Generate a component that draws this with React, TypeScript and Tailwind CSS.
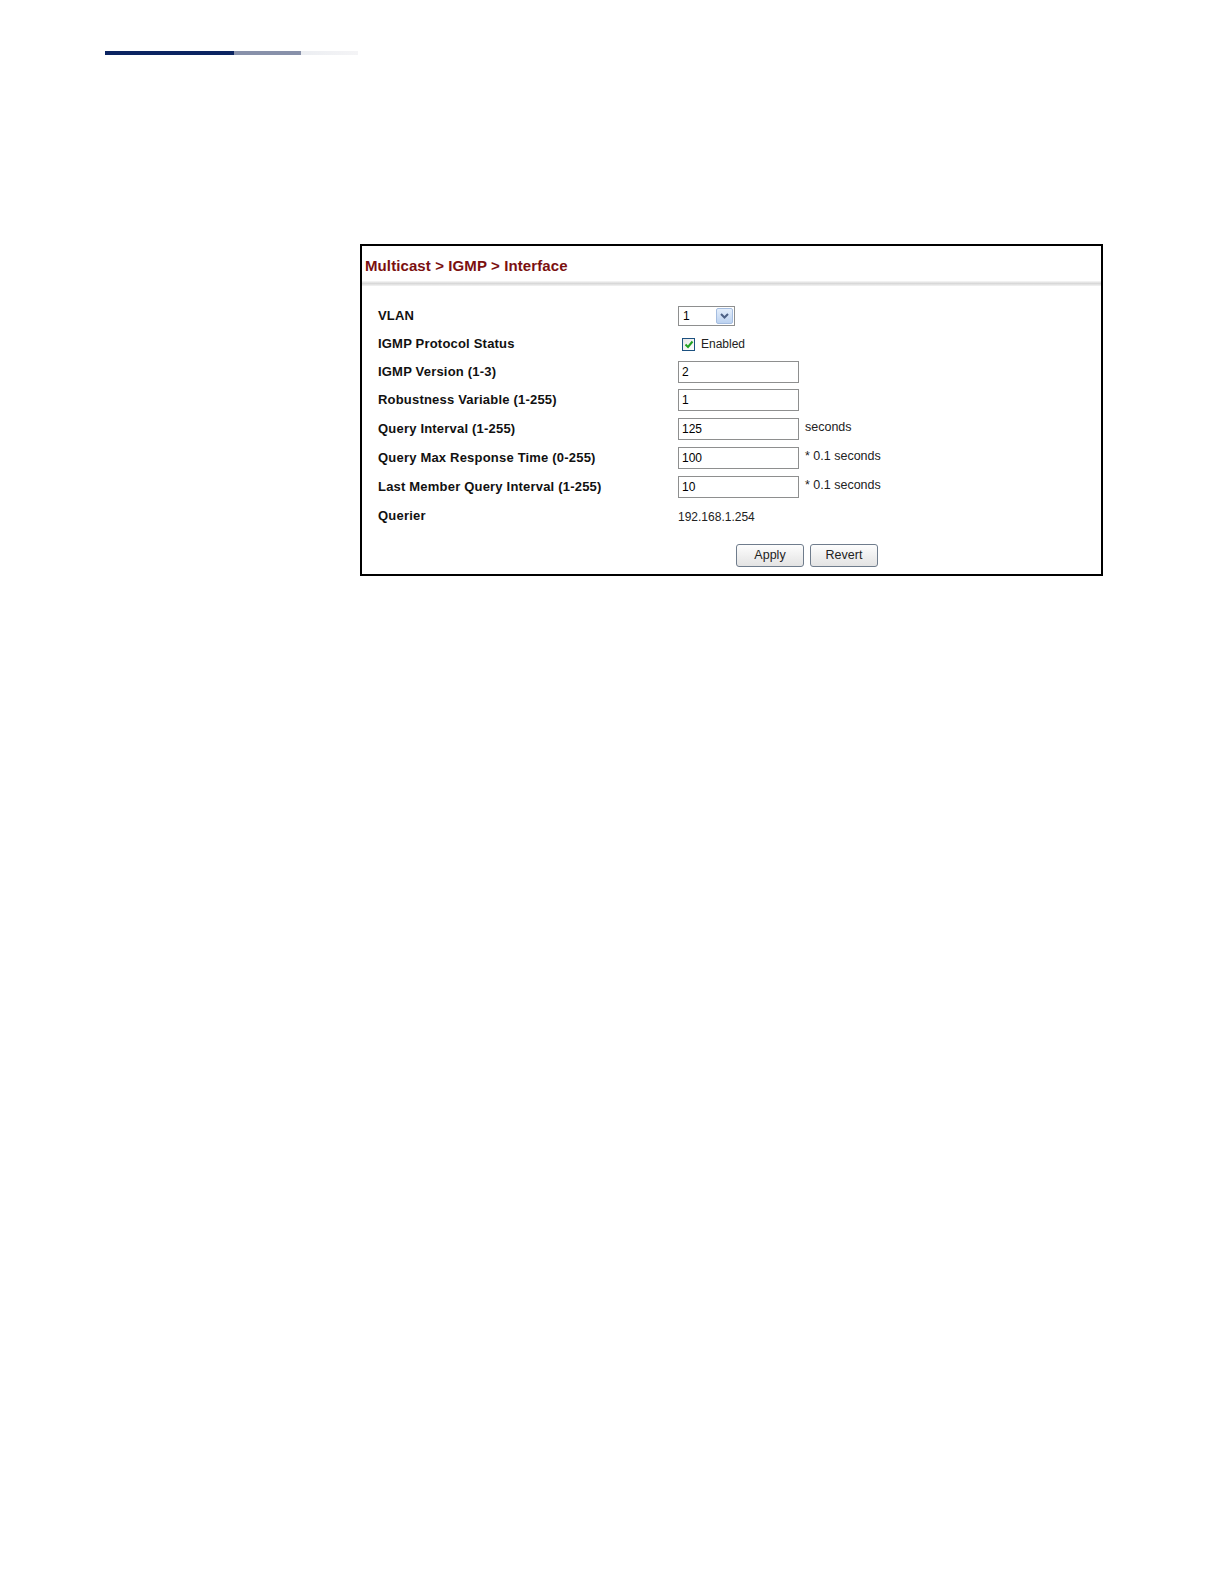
import React from 'react'

function TextBox({ value, suffix }: { value: string; suffix?: string }) {
  return (
    <div className="flex items-center">
      <div className="w-[121px] h-[22px] border border-[#8e8f8f] bg-white px-[3px] flex items-center text-[12px] text-black">
        {value}
      </div>
      {suffix && <span className="ml-[6px] -mt-[3px] text-[12.5px] text-[#222]">{suffix}</span>}
    </div>
  )
}

export default function App() {
  const fields = [
    {
      label: 'VLAN',
      h: 'h-[28px]',
      field: (
        <div className="flex items-center w-[57px] h-[20px] border border-[#8e8f8f] bg-white">
          <span className="flex-1 pl-[4px] text-[12px]">1</span>
          <div className="w-[17px] h-[16px] mr-[1px] rounded-[2px] border border-[#a5bde0] bg-gradient-to-b from-[#e4eefb] to-[#bcd2f0] flex items-center justify-center">
            <svg width="9" height="6" viewBox="0 0 9 6">
              <path d="M1 1 L4.5 4.5 L8 1" stroke="#4d6185" strokeWidth="2" fill="none" />
            </svg>
          </div>
        </div>
      ),
    },
    {
      label: 'IGMP Protocol Status',
      h: 'h-[28px]',
      field: (
        <div className="flex items-center pl-[4px]">
          <div className="w-[13px] h-[13px] border border-[#1c5180] bg-gradient-to-br from-[#e6e6e6] to-white flex items-center justify-center">
            <svg width="10" height="9" viewBox="0 0 10 9">
              <path d="M1.5 4.5 L4 7 L8.5 1.5" stroke="#21a121" strokeWidth="2" fill="none" />
            </svg>
          </div>
          <span className="ml-[6px] text-[12px] text-[#222]">Enabled</span>
        </div>
      ),
    },
    { label: 'IGMP Version (1-3)', h: 'h-[28px]', field: <TextBox value="2" /> },
    { label: 'Robustness Variable (1-255)', h: 'h-[28px]', field: <TextBox value="1" /> },
    { label: 'Query Interval (1-255)', h: 'h-[29px]', field: <TextBox value="125" suffix="seconds" /> },
    { label: 'Query Max Response Time (0-255)', h: 'h-[29px]', field: <TextBox value="100" suffix="* 0.1 seconds" /> },
    { label: 'Last Member Query Interval (1-255)', h: 'h-[29px]', field: <TextBox value="10" suffix="* 0.1 seconds" /> },
    {
      label: 'Querier',
      h: 'h-[29px]',
      field: <span className="text-[12px] text-[#222]">192.168.1.254</span>,
    },
  ]

  return (
    <div className="w-full min-h-[1584px] bg-white font-['Liberation_Sans',Arial,sans-serif]">
      {/* top page rule */}
      <div className="pt-[51px] pl-[105px] flex">
        <div className="w-[129px] h-[4px] bg-[#0b2461]" />
        <div className="w-[67px] h-[4px] bg-[#8891aa]" />
        <div className="w-[57px] h-[4px] bg-gradient-to-r from-[#eceef2] to-[#f4f4f6]" />
      </div>

      <div className="ml-[360px] mt-[189px] w-[743px] h-[332px] border-2 border-black bg-white">
        <div className="pl-[3px] pt-[11px] text-[15px] font-bold text-[#7b1010] leading-[18px] tracking-[0.1px]">
          Multicast &gt; IGMP &gt; Interface
        </div>
        <div className="mt-[6px] h-[5px] bg-gradient-to-b from-[#f7f7f7] via-[#d8d8d8] to-[#f4f4f4]" />

        <div className="mt-[16px] pl-[16px]">
          {fields.map((r) => (
            <div key={r.label} className={`flex items-center ${r.h}`}>
              <div className="w-[300px] text-[13px] font-bold text-[#111] tracking-[0.2px]">{r.label}</div>
              <div>{r.field}</div>
            </div>
          ))}
        </div>

        <div className="mt-[14px] pl-[374px] flex gap-[6px]">
          <button className="w-[68px] h-[23px] rounded-[3px] border border-[#6f7c8c] bg-gradient-to-b from-[#fdfdfd] to-[#e3e3e3] text-[12.5px] text-[#222]">
            Apply
          </button>
          <button className="w-[68px] h-[23px] rounded-[3px] border border-[#6f7c8c] bg-gradient-to-b from-[#fdfdfd] to-[#e3e3e3] text-[12.5px] text-[#222]">
            Revert
          </button>
        </div>
      </div>
    </div>
  )
}
